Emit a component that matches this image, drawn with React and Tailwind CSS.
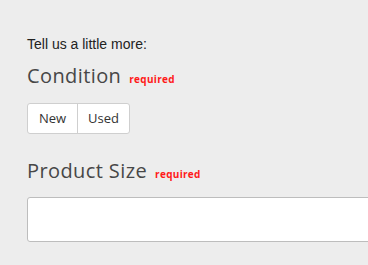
const App = () => {
  return (
    <div className="min-h-[265px] bg-[#ededed] pl-[27px] pt-[36px] overflow-hidden">
      <p className="text-[14px] leading-[16px] text-[#222] font-['Liberation_Sans',Arial,sans-serif]">
        Tell us a little more:
      </p>
      <div className="mt-[10px] flex items-baseline gap-[8px] font-['Open_Sans',sans-serif]">
        <h2 className="text-[20px] leading-[28px] font-medium tracking-[0.4px] text-[#474747]">Condition</h2>
        <span className="text-[10px] font-bold tracking-[0.3px] text-[#ff1a1a]">required</span>
      </div>
      <div className="mt-[13px] inline-flex rounded-[3px] border border-[#cfcfcf] bg-white font-['Open_Sans',sans-serif] text-[13px] text-[#333]">
        <button className="w-[50px] h-[29px] border-r border-[#cfcfcf]">New</button>
        <button className="w-[51px] h-[29px]">Used</button>
      </div>
      <div className="mt-[23px] flex items-baseline gap-[8px] font-['Open_Sans',sans-serif]">
        <h2 className="text-[20px] leading-[28px] font-medium tracking-[0.4px] text-[#474747]">Product Size</h2>
        <span className="text-[10px] font-bold tracking-[0.3px] text-[#ff1a1a]">required</span>
      </div>
      <input
        type="text"
        className="mt-[12px] block w-[400px] h-[45px] rounded-[3px] border border-[#bdbdbd] bg-white"
      />
    </div>
  );
};

export default App;
